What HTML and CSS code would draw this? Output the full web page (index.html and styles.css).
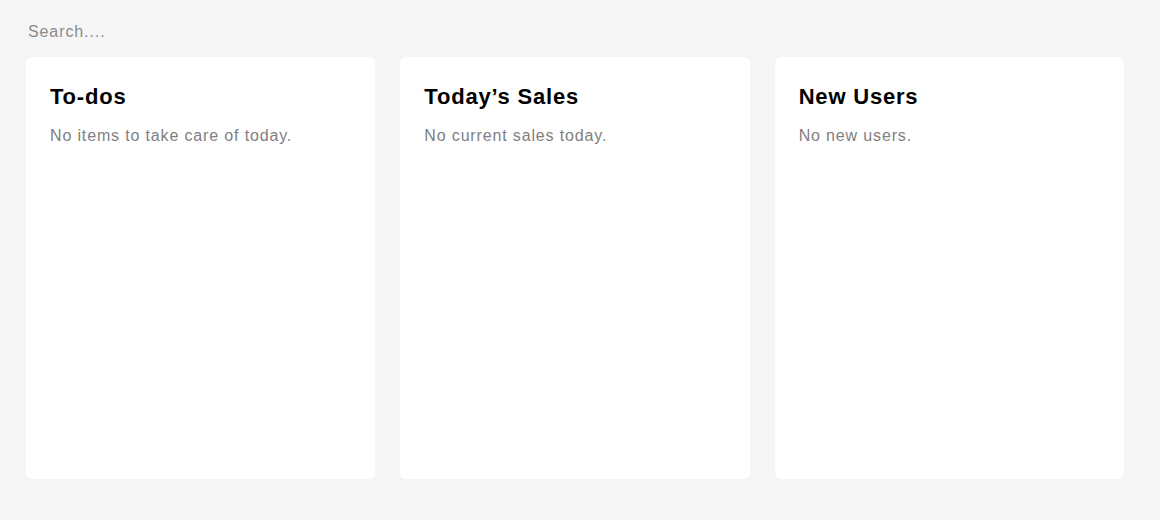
FILE: index.html
```html
<!DOCTYPE html>
<html>
<head>
<meta charset="utf-8">
<link rel="stylesheet" href="styles.css">
</head>
<body>
<div class="page">
  <input class="search" type="text" placeholder="Search....">
  <div class="cards">
    <section class="card">
      <h2 class="card-title">To-dos</h2>
      <p class="card-text">No items to take care of today.</p>
    </section>
    <section class="card">
      <h2 class="card-title">Today’s Sales</h2>
      <p class="card-text">No current sales today.</p>
    </section>
    <section class="card">
      <h2 class="card-title">New Users</h2>
      <p class="card-text">No new users.</p>
    </section>
  </div>
</div>
</body>
</html>
```
FILE: styles.css
```css
html, body {
  margin: 0;
  padding: 0;
  background: #f5f5f5;
  font-family: "Liberation Sans", Arial, sans-serif;
}
.page {
  width: 1098px;
  padding: 18px 0 0 26px;
}
.search {
  display: block;
  border: none;
  background: transparent;
  outline: none;
  padding: 1px 2px 0;
  height: 26px;
  width: 300px;
  box-sizing: border-box;
  font-family: "Liberation Sans", Arial, sans-serif;
  font-size: 16px;
  letter-spacing: 0.9px;
  color: #333;
}
.search::placeholder {
  color: #8a8a8a;
}
.cards {
  display: grid;
  grid-template-columns: repeat(3, 1fr);
  gap: 25px;
  margin-top: 13px;
}
.card {
  background: #fff;
  border-radius: 6px;
  height: 422px;
  padding: 27px 24px;
  box-sizing: border-box;
}
.card-title {
  margin: 0;
  font-size: 22px;
  font-weight: 700;
  letter-spacing: 0.8px;
  color: #000;
  line-height: 26px;
}
.card-text {
  margin: 16px 0 0;
  font-size: 16px;
  letter-spacing: 0.85px;
  color: #808080;
  line-height: 20px;
}
```
